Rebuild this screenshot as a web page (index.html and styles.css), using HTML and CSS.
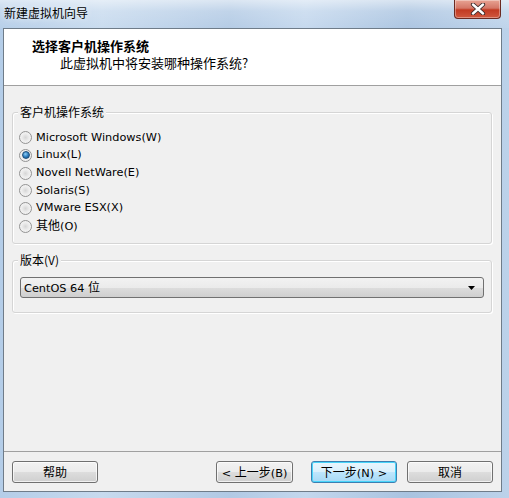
FILE: index.html
```html
<!DOCTYPE html>
<html>
<head>
<meta charset="utf-8">
<link rel="stylesheet" href="styles.css">
</head>
<body>
<div class="window">
  <div class="titlebar">
    <span class="title">新建虚拟机向导</span>
    <div class="close">
      <svg width="20" height="12" viewBox="0 0 20 12">
        <path d="M5 1.5 L15 10.5 M15 1.5 L5 10.5" stroke="#3a2a2a" stroke-width="4.2" stroke-linecap="round"/>
        <path d="M5 1.5 L15 10.5 M15 1.5 L5 10.5" stroke="#ffffff" stroke-width="2.4" stroke-linecap="round"/>
      </svg>
    </div>
  </div>
  <div class="frame-row">
    <div class="client">
      <div class="header">
        <div class="h-title">选择客户机操作系统</div>
        <div class="h-sub">此虚拟机中将安装哪种操作系统?</div>
      </div>
      <div class="body">
        <div class="group group-os">
          <span class="legend">客户机操作系统</span>
          <div class="radio-row"><span class="radio"></span><span class="lbl">Microsoft Windows(W)</span></div>
          <div class="radio-row"><span class="radio checked"></span><span class="lbl">Linux(L)</span></div>
          <div class="radio-row"><span class="radio"></span><span class="lbl">Novell NetWare(E)</span></div>
          <div class="radio-row"><span class="radio"></span><span class="lbl">Solaris(S)</span></div>
          <div class="radio-row"><span class="radio"></span><span class="lbl">VMware ESX(X)</span></div>
          <div class="radio-row"><span class="radio"></span><span class="lbl"><span class="zh">其他</span>(O)</span></div>
        </div>
        <div class="group group-ver">
          <span class="legend"><span class="zh">版本</span>(V)</span>
          <div class="select">
            <span class="sel-text">CentOS 64 <span class="zh">位</span></span>
            <svg class="arrow" width="8" height="5" viewBox="0 0 8 5"><path d="M0 0 H7 L3.5 4 Z" fill="#000"/></svg>
          </div>
        </div>
      </div>
      <div class="footer">
        <button class="btn btn-help"><span class="zh">帮助</span></button>
        <div class="spacer"></div>
        <button class="btn btn-back">&lt; <span class="zh">上一步</span>(B)</button>
        <button class="btn btn-next default"><span class="zh">下一步</span>(N) &gt;</button>
        <button class="btn btn-cancel"><span class="zh">取消</span></button>
      </div>
    </div>
  </div>
</div>
</body>
</html>
```
FILE: styles.css
```css
* { box-sizing: border-box; }
html, body { margin: 0; padding: 0; }
body {
  width: 509px;
  height: 498px;
  overflow: hidden;
  font-family: "DejaVu Sans", "Noto Sans CJK SC", sans-serif;
  font-size: 11.3px;
  color: #000;
}
.zh { font-family: "Noto Sans CJK SC", sans-serif; font-size: 12px; }

.window {
  width: 509px;
  height: 498px;
  display: flex;
  flex-direction: column;
  background: linear-gradient(90deg, #b4cde8 0%, #c7daee 20%, #b1c9e4 45%, #c3d7ed 60%, #a9c3e0 80%, #bcd2ea 100%);
}
.titlebar {
  height: 28px;
  flex: none;
  display: flex;
  align-items: flex-start;
  justify-content: space-between;
  background: linear-gradient(180deg, rgba(255,255,255,0.55) 0%, rgba(255,255,255,0.2) 40%, rgba(255,255,255,0.05) 100%);
}
.title {
  font-family: "Noto Sans CJK SC", sans-serif;
  font-size: 12px;
  line-height: 16px;
  margin: 5px 0 0 4px;
  color: #000;
  text-shadow: 0 0 6px rgba(255,255,255,0.9);
}
.close {
  width: 47px;
  height: 19px;
  margin-right: 8px;
  border: 1px solid #6b2a22;
  border-top: none;
  border-radius: 0 0 4px 4px;
  background: linear-gradient(180deg, #e8a393 0%, #d47767 45%, #c23a22 55%, #d0583f 100%);
  box-shadow: inset 0 0 0 1px rgba(255,255,255,0.35);
  display: flex;
  align-items: center;
  justify-content: center;
}
.frame-row {
  flex: none;
  height: 464px;
  display: flex;
  padding-left: 3px;
}
.client {
  width: 499px;
  height: 464px;
  border: 1px solid #6f7c89;
  background: #f0f0f0;
  display: flex;
  flex-direction: column;
}
.header {
  height: 57px;
  flex: none;
  background: #fff;
  border-bottom: 1px solid #a0a0a0;
  padding: 8px 0 0 28px;
}
.h-title {
  font-family: "Noto Sans CJK SC", sans-serif;
  font-size: 13px;
  font-weight: bold;
  line-height: 17px;
}
.h-sub {
  font-family: "Noto Sans CJK SC", sans-serif;
  font-size: 13px;
  line-height: 17px;
  padding-left: 28px;
}
.body {
  flex: 1;
  padding: 26px 9px 0 8px;
}
.group {
  position: relative;
  border: 1px solid #d5d5d5;
  border-radius: 3px;
  box-shadow: inset 1px 1px 0 #fff, 1px 1px 0 #fff;
}
.legend {
  position: absolute;
  top: -9px;
  left: 5px;
  padding: 0 2px;
  background: #f0f0f0;
  font-family: "Noto Sans CJK SC", "DejaVu Sans", sans-serif;
  font-size: 12px;
  line-height: 16px;
}
.legend .zh { font-size: 12px; }
.group-os {
  height: 132px;
  padding: 16px 0 0 6px;
}
.radio-row {
  height: 17.66px;
  display: flex;
  align-items: center;
  gap: 4px;
}
.radio {
  width: 13px;
  height: 13px;
  border-radius: 50%;
  border: 1px solid #939393;
  background: radial-gradient(circle at 50% 50%, #d6d6d6 0%, #ececec 45%, #f9f9f9 100%);
  display: flex;
  align-items: center;
  justify-content: center;
  flex: none;
}
.radio.checked::after {
  content: "";
  width: 6px;
  height: 6px;
  border-radius: 50%;
  background: radial-gradient(circle at 40% 35%, #8fd0f8 0%, #2f7fc0 50%, #0d4a80 100%);
  border: 1px solid #1f4f7a;
}
.lbl { line-height: 16px; }
.group-ver {
  margin-top: 16px;
  height: 53px;
  padding: 16px 7px 0 7px;
}
.select {
  height: 21px;
  border: 1px solid #707070;
  border-radius: 3px;
  background: linear-gradient(180deg, #f2f2f2 0%, #ebebeb 50%, #dddddd 51%, #cfcfcf 100%);
  display: flex;
  align-items: center;
  justify-content: space-between;
  padding: 0 7px 0 3px;
}
.sel-text { line-height: 16px; }
.arrow { margin-top: 1px; }
.footer {
  flex: none;
  height: 40px;
  border-top: 1px solid #a0a0a0;
  display: flex;
  align-items: flex-start;
  padding: 9px 8px 0 8px;
}
.spacer { flex: 1; }
.btn {
  height: 22px;
  border: 1px solid #707070;
  border-radius: 3px;
  background: linear-gradient(180deg, #f2f2f2 0%, #ebebeb 50%, #dddddd 51%, #cfcfcf 100%);
  box-shadow: inset 0 0 0 1px rgba(255,255,255,0.7);
  font-family: "DejaVu Sans", "Noto Sans CJK SC", sans-serif;
  font-size: 11.3px;
  color: #000;
  padding: 0;
  display: block;
  text-align: center;
  line-height: 19px;
  white-space: nowrap;
}
.btn-help { width: 86px; }
.btn-back { width: 77px; }
.btn-next { width: 86px; margin-left: 18px; }
.btn-cancel { width: 86px; margin-left: 10px; }
.btn.default {
  border-color: #3c7fb1;
  background: linear-gradient(180deg, #eaf6fd 0%, #d9f0fc 50%, #bee6fd 51%, #a7d9f5 100%);
  box-shadow: inset 0 0 0 1px #48d5fa;
}
```
